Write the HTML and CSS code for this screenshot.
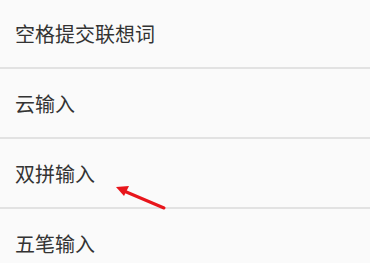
FILE: index.html
```html
<!DOCTYPE html>
<html lang="zh-CN">
<head>
  <meta charset="UTF-8">
  <meta name="viewport" content="width=device-width, initial-scale=1">
  <title>输入设置</title>
  <link rel="stylesheet" href="styles.css">
</head>
<body>
  <ul class="settings">
    <li class="item first">空格提交联想词</li>
    <li class="item">云输入</li>
    <li class="item">双拼输入</li>
    <li class="item">五笔输入</li>
  </ul>

  <svg class="arrow" width="370" height="263" viewBox="0 0 370 263">
    <line x1="164" y1="208" x2="124" y2="191" stroke="#e8151b" stroke-width="3" stroke-linecap="round"/>
    <polygon points="116,187 129,186 124,196" fill="#e8151b"/>
  </svg>
</body>
</html>
```

FILE: styles.css
```css
:root {
  --bg: #fafafa;
  --line: #e2e2e2;
  --text: #333333;
}

body {
  margin: 0;
  background: var(--bg);
  font-family: "Noto Sans CJK SC", "Noto Sans", sans-serif;
  color: var(--text);
  overflow: hidden;
}

.settings {
  list-style: none;
  margin: 0;
  padding: 0;
}

.item {
  height: 68px;
  display: flex;
  align-items: center;
  padding-left: 15px;
  font-size: 20px;
  border-bottom: 2px solid var(--line);
}

.item.first {
  height: 67px;
}

.arrow {
  position: absolute;
  left: 0;
  top: 0;
  pointer-events: none;
}
```
